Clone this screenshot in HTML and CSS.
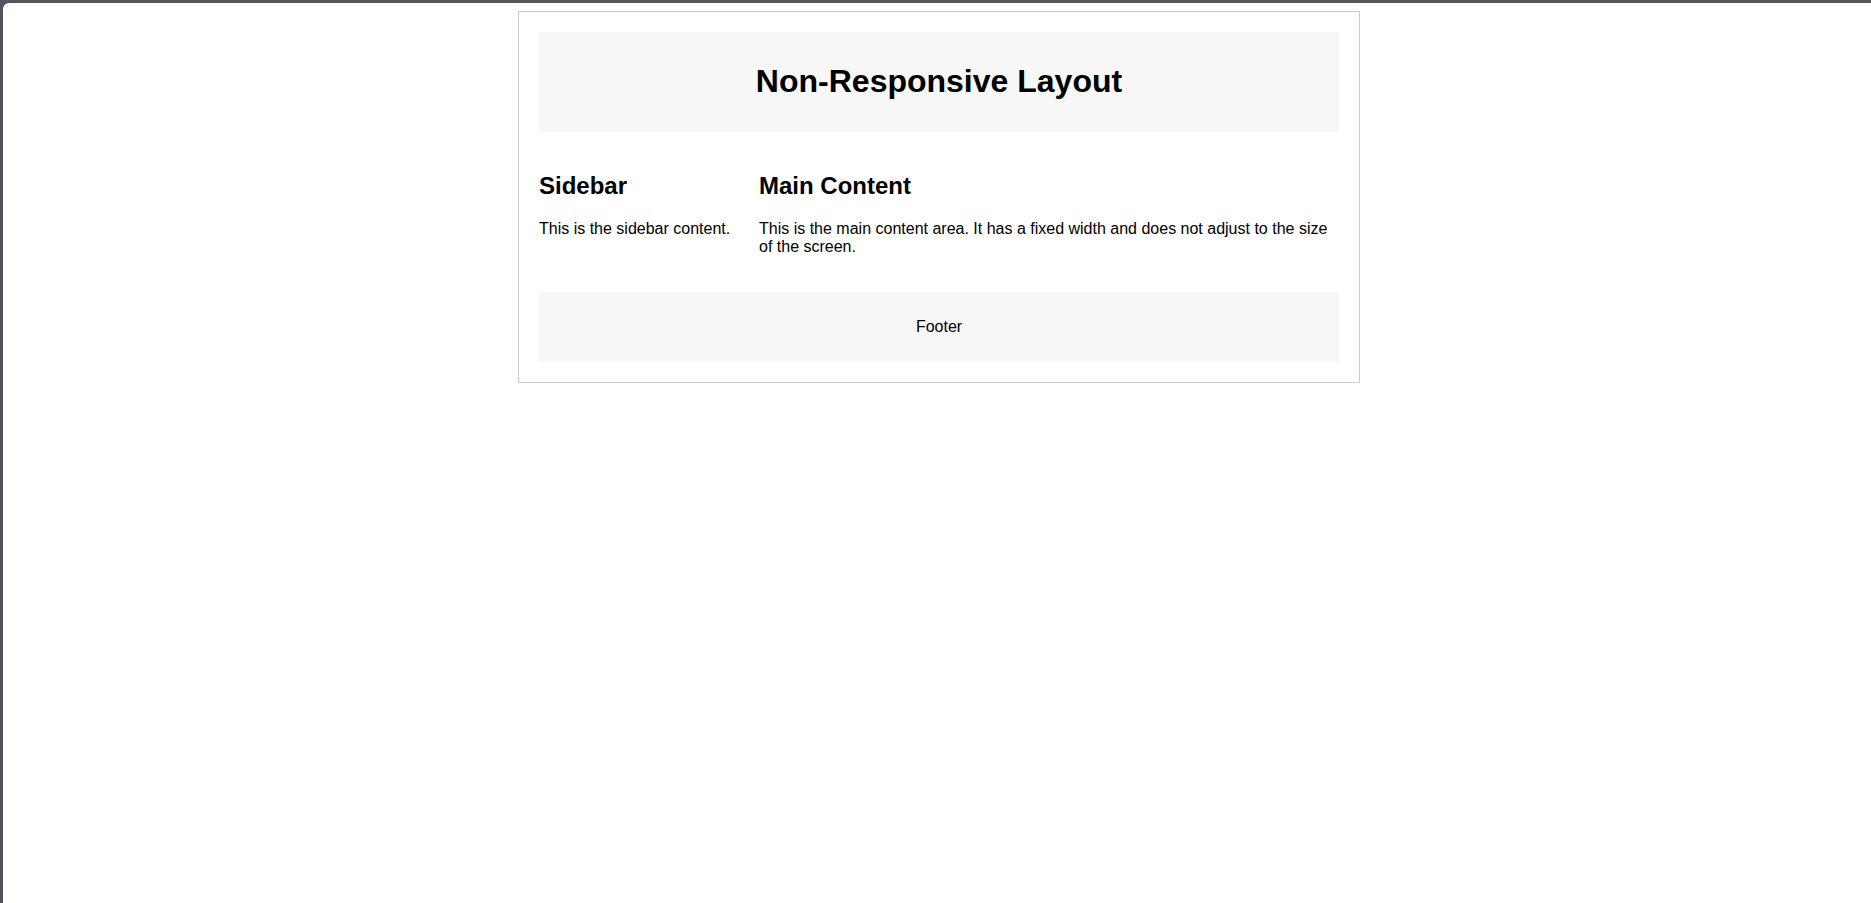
FILE: index.html
```html
<!DOCTYPE html>
<html lang="en">
<head>
<meta charset="utf-8">
<title>Non-Responsive Layout</title>
<link rel="stylesheet" href="styles.css">
</head>
<body>
<div class="window">
  <div class="container">
    <header class="header">
      <h1>Non-Responsive Layout</h1>
    </header>
    <div class="columns">
      <aside class="sidebar">
        <h2>Sidebar</h2>
        <p>This is the sidebar content.</p>
      </aside>
      <main class="main">
        <h2>Main Content</h2>
        <p>This is the main content area. It has a fixed width and does not adjust to the size of the screen.</p>
      </main>
    </div>
    <footer class="footer">
      <p>Footer</p>
    </footer>
  </div>
</div>
</body>
</html>
```

FILE: styles.css
```css
html, body {
  margin: 0;
  padding: 0;
}

body {
  background: #54555b;
  font-family: "Liberation Sans", Arial, sans-serif;
  color: #000;
  font-size: 16px;
}

.window {
  margin: 3px 0 0 3px;
  min-height: calc(100vh - 3px);
  box-sizing: border-box;
  background: #fff;
  border-top-left-radius: 6px;
  padding: 8px 6px 8px 10px;
}

.container {
  width: 800px;
  margin: 0 auto;
  padding: 20px;
  border: 1px solid #ccc;
}

.header {
  background: #f7f7f7;
  padding: 10px;
  text-align: center;
  margin-bottom: 20px;
}

.header h1 {
  font-size: 32px;
  margin: 21.44px 0;
}

.columns {
  display: grid;
  grid-template-columns: 200px 580px;
  column-gap: 20px;
}

.columns h2 {
  font-size: 24px;
  margin: 19.92px 0;
}

.columns p {
  margin: 16px 0;
}

.footer {
  background: #f7f7f7;
  padding: 10px;
  text-align: center;
  margin-top: 20px;
}

.footer p {
  margin: 16px 0;
}
```
